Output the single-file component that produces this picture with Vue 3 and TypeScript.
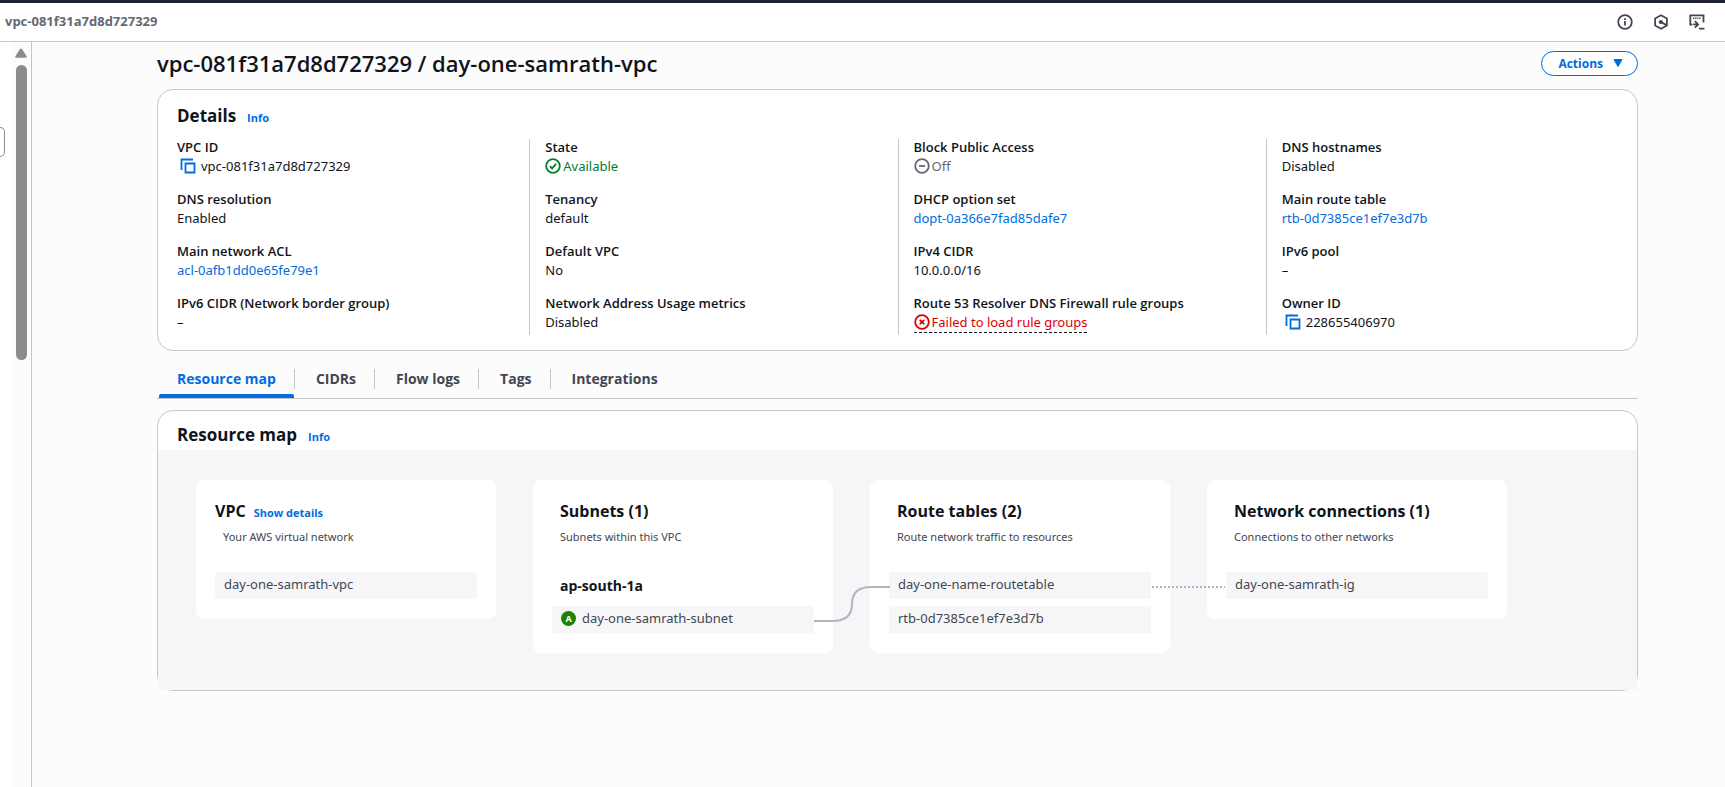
<script setup lang="ts">
type Kind = 'text' | 'link' | 'copyable' | 'ok' | 'off' | 'error'
interface Field { label: string; value: string; kind: Kind }
interface MapItem { name: string; badge?: string; wire?: 'curve' | 'dots' }
interface MapColumn { title: string; note: string; action?: string; zone?: string; items: MapItem[] }

const columns: Field[][] = [
  [
    { label: 'VPC ID', value: 'vpc-081f31a7d8d727329', kind: 'copyable' },
    { label: 'DNS resolution', value: 'Enabled', kind: 'text' },
    { label: 'Main network ACL', value: 'acl-0afb1dd0e65fe79e1', kind: 'link' },
    { label: 'IPv6 CIDR (Network border group)', value: '–', kind: 'text' },
  ],
  [
    { label: 'State', value: 'Available', kind: 'ok' },
    { label: 'Tenancy', value: 'default', kind: 'text' },
    { label: 'Default VPC', value: 'No', kind: 'text' },
    { label: 'Network Address Usage metrics', value: 'Disabled', kind: 'text' },
  ],
  [
    { label: 'Block Public Access', value: 'Off', kind: 'off' },
    { label: 'DHCP option set', value: 'dopt-0a366e7fad85dafe7', kind: 'link' },
    { label: 'IPv4 CIDR', value: '10.0.0.0/16', kind: 'text' },
    { label: 'Route 53 Resolver DNS Firewall rule groups', value: 'Failed to load rule groups', kind: 'error' },
  ],
  [
    { label: 'DNS hostnames', value: 'Disabled', kind: 'text' },
    { label: 'Main route table', value: 'rtb-0d7385ce1ef7e3d7b', kind: 'link' },
    { label: 'IPv6 pool', value: '–', kind: 'text' },
    { label: 'Owner ID', value: '228655406970', kind: 'copyable' },
  ],
]

const tabs: string[] = ['Resource map', 'CIDRs', 'Flow logs', 'Tags', 'Integrations']

const mapColumns: MapColumn[] = [
  { title: 'VPC', note: 'Your AWS virtual network', action: 'Show details', items: [{ name: 'day-one-samrath-vpc' }] },
  { title: 'Subnets (1)', note: 'Subnets within this VPC', zone: 'ap-south-1a', items: [{ name: 'day-one-samrath-subnet', badge: 'A', wire: 'curve' }] },
  { title: 'Route tables (2)', note: 'Route network traffic to resources', items: [{ name: 'day-one-name-routetable', wire: 'dots' }, { name: 'rtb-0d7385ce1ef7e3d7b' }] },
  { title: 'Network connections (1)', note: 'Connections to other networks', items: [{ name: 'day-one-samrath-ig' }] },
]
</script>

<template>
  <div class="shell">
    <header class="topbar">
      <span class="crumb">vpc-081f31a7d8d727329</span>
      <div class="tools">
        <button type="button" aria-label="Information">
          <svg viewBox="0 0 16 16" class="ico"><circle cx="8" cy="8" r="6.8" /><path d="M8 7v4.6M8 4.2v1.7" /></svg>
        </button>
        <button type="button" aria-label="Assistant">
          <svg viewBox="0 0 16 16" class="ico"><path d="M8 1.2l5.9 3.3v7L8 14.8l-5.9-3.3v-7z" /><circle cx="7.8" cy="8" r="2.1" class="solid" /><path d="M8 8l5.4 3.1" /></svg>
        </button>
        <button type="button" aria-label="CloudShell">
          <svg viewBox="0 0 16 16" class="ico"><path d="M3.4 10.6H1.3V1.3h13.2v7.2M10 14.6h5.5" /><path d="M4 4.2h8" stroke-width="1.5" stroke-dasharray="1.3 .8" /><path d="M4.2 10.4h4.4M5.9 7.2l3.2 3.2-3.2 3.2" /></svg>
        </button>
      </div>
    </header>

    <div class="body">
      <aside class="side">
        <button type="button" class="handle" aria-label="Open navigation"></button>
        <div class="track">
          <svg viewBox="0 0 12 10" class="up"><path d="M6 0.5q.6 0 1 .6l4.6 7.2q.5 1.2-.8 1.4H1.2Q-.1 9.5.4 8.3L5 1.1Q5.4.5 6 .5z" /></svg>
          <div class="thumb"></div>
        </div>
      </aside>

      <main class="content">
        <div class="title-row">
          <h1>vpc-081f31a7d8d727329 / day-one-samrath-vpc</h1>
          <button type="button" class="actions">Actions
            <svg viewBox="0 0 10 8"><path d="M1 .5h8L5 7.5z" /></svg>
          </button>
        </div>

        <section class="card details">
          <div class="card-head"><h2>Details</h2><a href="#" class="info">Info</a></div>
          <div class="grid">
            <dl v-for="(col, c) in columns" :key="c" class="col">
              <div v-for="f in col" :key="f.label" class="field">
                <dt>{{ f.label }}</dt>
                <dd :class="f.kind">
                  <a v-if="f.kind === 'link'" href="#">{{ f.value }}</a>
                  <template v-else-if="f.kind === 'copyable'">
                    <button type="button" class="copy" :aria-label="'Copy ' + f.label">
                      <svg viewBox="0 0 16 16" class="ico"><path d="M5.5 5.5h9v9h-9z" /><path d="M1.5 12V1.5H13" /></svg>
                    </button>{{ f.value }}
                  </template>
                  <span v-else-if="f.kind !== 'text'" class="status">
                    <svg viewBox="0 0 16 16" class="ico">
                      <circle cx="8" cy="8" r="6.8" />
                      <path v-if="f.kind === 'ok'" d="M4.8 8.2l2.3 2.2 4-4.6" />
                      <path v-else-if="f.kind === 'off'" d="M5 8h6" />
                      <path v-else d="M5.8 5.8l4.4 4.4M10.2 5.8l-4.4 4.4" />
                    </svg>{{ f.value }}
                  </span>
                  <template v-else>{{ f.value }}</template>
                </dd>
              </div>
            </dl>
          </div>
        </section>

        <nav class="tabs" role="tablist">
          <button v-for="(t, i) in tabs" :key="t" type="button" role="tab" class="tab" :class="{ active: i === 0 }" :aria-selected="i === 0">
            <span>{{ t }}</span>
          </button>
        </nav>

        <section class="card map-card">
          <div class="card-head"><h2>Resource map</h2><a href="#" class="info">Info</a></div>
          <div class="map">
            <article v-for="m in mapColumns" :key="m.title" class="node" :class="{ first: m.action }">
              <div class="node-head"><h3>{{ m.title }}</h3><a v-if="m.action" href="#" class="info">{{ m.action }}</a></div>
              <p class="note">{{ m.note }}</p>
              <div class="items">
                <h4 v-if="m.zone">{{ m.zone }}</h4>
                <div v-for="it in m.items" :key="it.name" class="item">
                  <span v-if="it.badge" class="badge">{{ it.badge }}</span>{{ it.name }}
                  <svg v-if="it.wire === 'curve'" class="wire curve" viewBox="0 0 76 38"><path d="M0 36H18C31 36 38 30 38 19S44 2 57 2H76" /></svg>
                  <svg v-else-if="it.wire === 'dots'" class="wire dots" viewBox="0 0 74 2"><path d="M1 1H74" /></svg>
                </div>
              </div>
            </article>
          </div>
        </section>
      </main>
    </div>
  </div>
</template>

<style>
html, body { height: 100%; background: #fcfcfd; }
body { margin: 0; overflow: hidden; }
#app { height: 100%; }
</style>

<style scoped>
* { box-sizing: border-box; }
.shell {
  min-height: 100%;
  display: flex;
  flex-direction: column;
  font-family: "Noto Sans", "Open Sans", sans-serif;
  font-size: 13px;
  line-height: 20px;
  color: #0f141a;
}
h1, h2, h3, h4, p, dl, dd { margin: 0; }
h1, h2, h3, h4, dt, .crumb, .info, .actions, .tab { font-family: "Open Sans", "Noto Sans", sans-serif; font-weight: 700; }
h1, dt { font-weight: 600; }
button { font-size: 13px; border: 0; background: none; padding: 0; color: inherit; cursor: pointer; }
a { color: #006ce0; text-decoration: none; }
.ico { width: 16px; height: 16px; display: block; fill: none; stroke: currentColor; stroke-width: 1.8; }
.solid { fill: currentColor; stroke: none; }

.topbar {
  height: 42px;
  border-top: 3px solid #1b212d;
  border-bottom: 1px solid #c6c6cd;
  background: #fff;
  display: flex;
  align-items: center;
  justify-content: space-between;
  padding: 0 20px 2px 5px;
}
.crumb { color: #656871; }
.tools { display: flex; gap: 20px; color: #424650; padding-top: 1px; }

.body { flex: 1; display: flex; }
.side { width: 32px; border-right: 1px solid #c6c6cd; background: #fff; display: flex; justify-content: space-between; }
.handle { width: 5px; height: 30px; margin-top: 85px; border: 1px solid #8c8c94; border-left: 0; border-radius: 0 7px 7px 0; background: #fff; }
.track { width: 19px; background: #fcfcfc; display: flex; flex-direction: column; align-items: center; gap: 7px; padding: 6px 4px 0 3px; }
.up { width: 12px; height: 10px; fill: #8b8b8b; }
.thumb { width: 11px; height: 295px; border-radius: 6px; background: #8b8b8b; }

.content { flex: 1; padding: 8px 87px 0 125px; min-width: 0; }
.title-row { display: flex; justify-content: space-between; align-items: flex-start; height: 39px; }
h1 { font-size: 22px; line-height: 26px; }
.actions {
  display: flex; align-items: center; gap: 10px; height: 25px; padding: 0 14px 1px 16px; margin-top: 1px;
  border: 1px solid #006ce0; border-radius: 13px; background: #fff; color: #006ce0; font-size: 12px;
}
.actions svg { width: 10px; height: 8px; fill: currentColor; stroke: currentColor; stroke-linejoin: round; }

.card { border: 1px solid #c6c6cd; border-radius: 16px; background: #fff; }
.card-head { display: flex; align-items: baseline; gap: 11px; padding-left: 19px; }
h2 { font-size: 17px; line-height: 22px; }
.info { font-size: 11px; }

.details { padding: 15px 0; }
.grid { display: grid; grid-template-columns: repeat(4, 1fr); padding: 11px 3px 0; }
.col { border-left: 1px solid #c6c6cd; padding-left: 15px; display: flex; flex-direction: column; gap: 12px; }
.col:first-child { border-color: transparent; }
.field { height: 40px; }
dt { line-height: 17px; }
dd { height: 20px; display: flex; align-items: center; }
.copy { margin: 0 5px 0 3px; color: #006ce0; }
.status { display: inline-flex; align-items: center; gap: 2px; }
.ok { color: #00802f; }
.off { color: #656871; }
.error { color: #db0000; }
.error .status { border-bottom: 1px dashed #0f141a; }

.tabs { display: flex; margin-top: 12px; height: 36px; border-bottom: 1px solid #c6c6cd; }
.tab { position: relative; display: flex; align-items: flex-start; padding: 6px 1px 0; color: #424650; font-size: 14px; }
.tab span { padding: 0 18px 0 19px; line-height: 20px; border-right: 1px solid #c6c6cd; }
.tab:last-child span { border: 0; }
.tab.active { color: #006ce0; }
.tab.active::after { content: ''; position: absolute; left: 2px; right: 2px; bottom: 0; height: 4px; border-radius: 2px 2px 0 0; background: #006ce0; }

.map-card { margin-top: 11px; padding-top: 13px; }
.map { margin-top: 3px; display: flex; align-items: flex-start; gap: 37px; padding: 30px 38px 37px; background: #f6f6f9; }
.node { width: 300px; padding: 20px 19px; border-radius: 8px; background: #fff; }
.node-head { display: flex; align-items: baseline; gap: 8px; height: 22px; padding-left: 8px; }
.first .node-head { padding-left: 0; }
h3 { font-size: 16px; line-height: 22px; }
.note { padding-left: 8px; margin-top: 5px; font-size: 11px; color: #424650; }
.items { display: flex; flex-direction: column; gap: 7px; margin-top: 25px; }
h4 { padding-left: 8px; font-size: 14px; line-height: 27px; }
.item { position: relative; display: flex; align-items: center; height: 27px; padding: 0 9px 3px; border-radius: 2px; background: #f6f6f9; color: #424650; }
.badge { width: 15px; height: 15px; margin-right: 6px; border-radius: 50%; background: #1d8102; color: #fff; font-size: 9px; font-weight: 700; line-height: 15px; text-align: center; }
.wire { position: absolute; left: 100%; fill: none; stroke: #b4b4bb; stroke-width: 2; z-index: 1; }
.curve { width: 76px; height: 38px; bottom: 10px; }
.dots { width: 74px; height: 2px; top: 14px; stroke-dasharray: 2 2; }
</style>
